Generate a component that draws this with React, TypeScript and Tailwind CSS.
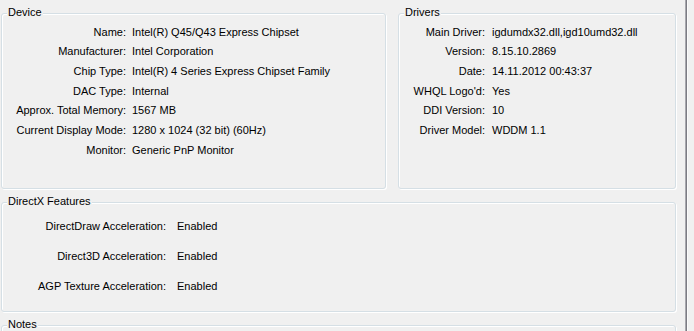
import type { ReactNode } from "react";

const deviceRows: [string, string][] = [
  ["Name:", "Intel(R) Q45/Q43 Express Chipset"],
  ["Manufacturer:", "Intel Corporation"],
  ["Chip Type:", "Intel(R) 4 Series Express Chipset Family"],
  ["DAC Type:", "Internal"],
  ["Approx. Total Memory:", "1567 MB"],
  ["Current Display Mode:", "1280 x 1024 (32 bit) (60Hz)"],
  ["Monitor:", "Generic PnP Monitor"],
];

const driverRows: [string, string][] = [
  ["Main Driver:", "igdumdx32.dll,igd10umd32.dll"],
  ["Version:", "8.15.10.2869"],
  ["Date:", "14.11.2012 00:43:37"],
  ["WHQL Logo'd:", "Yes"],
  ["DDI Version:", "10"],
  ["Driver Model:", "WDDM 1.1"],
];

const featureRows: [string, string][] = [
  ["DirectDraw Acceleration:", "Enabled"],
  ["Direct3D Acceleration:", "Enabled"],
  ["AGP Texture Acceleration:", "Enabled"],
];

function GroupBox({ title, className, children }: { title: string; className: string; children?: ReactNode }) {
  return (
    <div className={`relative shrink-0 rounded-[3px] border border-[#d5dfe5] shadow-[inset_1px_1px_0_#fff,1px_1px_0_#fff] ${className}`}>
      <span className="absolute -top-[8px] left-[5px] bg-[#f0f0f0] px-[1px] leading-[13px]">{title}</span>
      {children}
    </div>
  );
}

function InfoRows({ rows, labelWidth, gap, rowHeight }: { rows: [string, string][]; labelWidth: string; gap: string; rowHeight: string }) {
  return (
    <div className="flex flex-col">
      {rows.map(([label, value]) => (
        <div key={label} className={`flex items-center whitespace-nowrap ${rowHeight} ${gap}`}>
          <span className={`shrink-0 text-right ${labelWidth}`}>{label}</span>
          <span>{value}</span>
        </div>
      ))}
    </div>
  );
}

export default function App() {
  return (
    <div className="flex h-[331px] w-[694px] overflow-hidden bg-[#f0f0f0] font-['Liberation_Sans',Arial,sans-serif] text-[11px] text-black">
      <div className="flex w-[676px] shrink-0 flex-col gap-[13px] pl-[1px] pt-[13px]">
        <div className="flex shrink-0 gap-[12px]">
          <GroupBox title="Device" className="h-[176px] w-[385px] pt-[8px]">
            <InfoRows rows={deviceRows} labelWidth="w-[124px]" gap="gap-[6px]" rowHeight="h-[19.7px]" />
          </GroupBox>
          <GroupBox title="Drivers" className="h-[176px] w-[278px] pt-[8px]">
            <InfoRows rows={driverRows} labelWidth="w-[86px]" gap="gap-[7px]" rowHeight="h-[19.7px]" />
          </GroupBox>
        </div>
        <GroupBox title="DirectX Features" className="h-[110px] w-[675px] pt-[8px]">
          <InfoRows rows={featureRows} labelWidth="w-[164px]" gap="gap-[11px]" rowHeight="h-[30px]" />
        </GroupBox>
        <GroupBox title="Notes" className="h-[60px] w-[675px]" />
      </div>
      <div className="ml-[9px] flex shrink-0">
        <div className="w-[1px] bg-[#a7a7ad]" />
        <div className="w-[1px] bg-[#7b7b83]" />
        <div className="w-[1px] bg-[#fbfbfb]" />
      </div>
    </div>
  );
}
